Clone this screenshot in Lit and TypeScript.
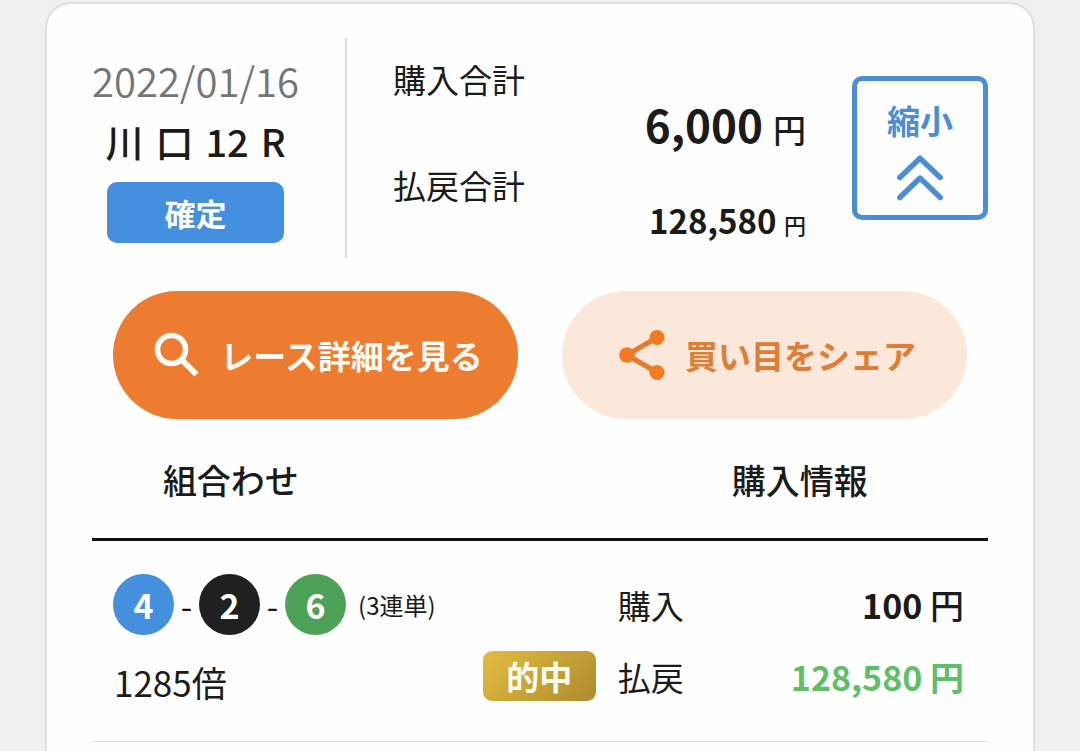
import { LitElement, html, css, svg } from "lit";
import { customElement, state } from "lit/decorators.js";

interface Bet {
  numbers: number[];
  type: string;
  odds: string;
  hit: boolean;
  stake: string;
  payout: string;
}

const searchIcon = svg`<svg class="icon search" viewBox="0 0 46 46" aria-hidden="true">
  <circle cx="17.5" cy="17.5" r="14" fill="none" stroke="currentColor" stroke-width="5.6"/>
  <path d="M27.5 27.5 L42.5 42.5" stroke="currentColor" stroke-width="6" fill="none"/>
</svg>`;

const shareIcon = svg`<svg class="icon share" viewBox="0 0 46 50" aria-hidden="true">
  <path d="M38 7.5 L8 25 L38 42.5" fill="none" stroke="currentColor" stroke-width="5"/>
  <g class="nodes"><circle cx="38" cy="7.5" r="7.5"/><circle cx="8" cy="25" r="7.8"/><circle cx="38" cy="42.5" r="7.5"/></g>
</svg>`;

const collapseIcon = svg`<svg class="chevrons" viewBox="0 0 46 46" aria-hidden="true">
  <path d="M2.8 22.5 L23 3.2 L43.2 22.5 M2.8 42.5 L23 23 L43.2 42.5" fill="none" stroke="currentColor" stroke-width="5.4" stroke-linecap="round" stroke-linejoin="round"/>
</svg>`;

@customElement("app-root")
export class AppRoot extends LitElement {
  static styles = css`
    :host {
      display: flex;
      flex-direction: column;
      min-height: 100vh;
      box-sizing: border-box;
      padding: 2px 45px 0;
      background: #f0f0f0;
      color: #1b1b1b;
      font-family: "Noto Sans CJK JP", sans-serif;
      font-size: 33px;
      line-height: 46px;
    }
    * { box-sizing: border-box; }
    button, dl, dt, dd, h1, p { margin: 0; padding: 0; font: inherit; }
    button { border: 0; background: none; cursor: pointer; }
    .card {
      flex: 1;
      padding: 34px 45px 8px;
      background: #fefefe;
      border: 2px solid #dedede;
      border-bottom: 0;
      border-radius: 26px 26px 0 0;
    }
    .summary { display: flex; align-items: flex-start; }
    .race {
      display: flex;
      flex-direction: column;
      align-items: center;
      padding: 14px 46px 15px 0;
      border-right: 2px solid #d9d9d9;
    }
    .date { font-size: 40px; line-height: 56px; font-weight: 350; color: #757575; }
    .venue {
      display: flex;
      gap: 12px;
      margin-top: 5px;
      font-size: 38px;
      line-height: 56px;
      font-weight: 500;
    }
    .status {
      width: 177px;
      margin-top: 13px;
      border-radius: 10px;
      background: #4590de;
      color: #fff;
      font-size: 31px;
      line-height: 61px;
      font-weight: 700;
      text-align: center;
    }
    .totals {
      flex: 1;
      display: grid;
      grid-template-columns: auto 1fr;
      row-gap: 6px;
      padding: 18px 46px 0 46px;
    }
    .totals dd {
      padding-top: 36px;
      text-align: right;
      white-space: nowrap;
      font-weight: 700;
    }
    .large { font-size: 44px; line-height: 64px; }
    .medium { font-size: 33px; line-height: 44px; }
    .yen { line-height: 1; font-weight: 500; }
    .large .yen { font-size: 33px; }
    .medium .yen { font-size: 22px; }
    .collapse {
      display: flex;
      flex-direction: column;
      align-items: center;
      width: 136px;
      height: 144px;
      margin-top: 38px;
      padding-top: 16px;
      border: 5px solid #4a8fd6;
      border-radius: 10px;
      color: #4a8fd6;
      font-weight: 700;
    }
    .chevrons { width: 46px; height: 46px; margin-top: 12px; }
    .actions {
      display: grid;
      grid-template-columns: 1fr 1fr;
      gap: 44px;
      margin-top: 33px;
      padding: 0 21px;
    }
    .action {
      display: flex;
      align-items: center;
      justify-content: center;
      gap: 20px;
      height: 128px;
      padding-left: 6px;
      border-radius: 64px;
      font-weight: 700;
      white-space: nowrap;
    }
    .icon { flex: none; }
    .primary { background: #ed7b30; color: #fffaf3; }
    .secondary { background: #fbe8da; color: #df7d36; }
    .search { width: 46px; height: 46px; }
    .share { width: 46px; height: 50px; color: #e87a2c; }
    .nodes { fill: #f17a22; }
    .bets {
      width: 100%;
      margin-top: 38px;
      border-collapse: collapse;
      table-layout: fixed;
    }
    .combo-col { width: 31%; }
    .info-col { width: 42%; }
    .bets th {
      padding: 0 0 35px;
      border-bottom: 3px solid #111;
      font-size: 34px;
      font-weight: 500;
    }
    .bets td { padding: 0; border-bottom: 1px solid #dedede; vertical-align: top; }
    .bet {
      display: flex;
      justify-content: space-between;
      align-items: flex-end;
      padding: 33px 16px 36px 21px;
    }
    .balls { display: flex; align-items: center; }
    .ball {
      width: 61px;
      border-radius: 50%;
      color: #fff;
      font-size: 34px;
      line-height: 61px;
      font-weight: 700;
      text-align: center;
    }
    .b2 { background: #202020; }
    .b4 { background: #4590de; }
    .b6 { background: #4ca357; }
    .dash { width: 25px; text-align: center; }
    .type { margin-left: 12px; font-size: 24px; }
    .odds { margin-top: 24px; padding-left: 1px; font-size: 35px; }
    .hit {
      width: 113px;
      margin-bottom: 4px;
      border-radius: 9px;
      background: linear-gradient(135deg, #e3bd3f, #ad8b30);
      color: #fffdf4;
      line-height: 50px;
      font-weight: 700;
      text-align: center;
    }
    .amounts { padding: 41px 24px 0 6px; }
    .line { display: flex; justify-content: space-between; margin-bottom: 26px; }
    .line dd { font-size: 34px; font-weight: 700; }
    .line .won { color: #5ebf68; }
    .won .yen { font-weight: 700; }
  `;

  @state() private open = true;

  private bets: Bet[] = [
    { numbers: [4, 2, 6], type: "3連単", odds: "1285倍", hit: true, stake: "100", payout: "128,580" },
  ];

  private renderBet(bet: Bet) {
    return html`<tr>
      <td colspan="2">
        <div class="bet">
          <div>
            <div class="balls">
              ${bet.numbers.map((n, i) => html`${i ? html`<span class="dash">-</span>` : ""}<span class="ball b${n}">${n}</span>`)}
              <span class="type">(${bet.type})</span>
            </div>
            <p class="odds">${bet.odds}</p>
          </div>
          ${bet.hit ? html`<span class="hit">的中</span>` : ""}
        </div>
      </td>
      <td>
        <dl class="amounts">
          <div class="line"><dt>購入</dt><dd>${bet.stake} <span class="yen">円</span></dd></div>
          <div class="line"><dt>払戻</dt><dd class="won">${bet.payout} <span class="yen">円</span></dd></div>
        </dl>
      </td>
    </tr>`;
  }

  render() {
    return html`<main class="card">
      <section class="summary">
        <div class="race">
          <time class="date" datetime="2022-01-16">2022/01/16</time>
          <h1 class="venue"><span>川</span><span>口</span><span>12</span><span>R</span></h1>
          <span class="status">確定</span>
        </div>
        <dl class="totals">
          <dt>購入合計</dt>
          <dd class="large">6,000 <span class="yen">円</span></dd>
          <dt>払戻合計</dt>
          <dd class="medium">128,580 <span class="yen">円</span></dd>
        </dl>
        <button class="collapse" type="button" aria-expanded=${this.open} @click=${() => (this.open = !this.open)}>
          <span>縮小</span>${collapseIcon}
        </button>
      </section>
      <div class="actions">
        <button class="action primary" type="button">${searchIcon}<span>レース詳細を見る</span></button>
        <button class="action secondary" type="button">${shareIcon}<span>買い目をシェア</span></button>
      </div>
      ${this.open
        ? html`<table class="bets">
            <colgroup><col class="combo-col"><col><col class="info-col"></colgroup>
            <thead><tr><th scope="col">組合わせ</th><th></th><th scope="col">購入情報</th></tr></thead>
            <tbody>${this.bets.map((b) => this.renderBet(b))}</tbody>
          </table>`
        : ""}
    </main>`;
  }
}
